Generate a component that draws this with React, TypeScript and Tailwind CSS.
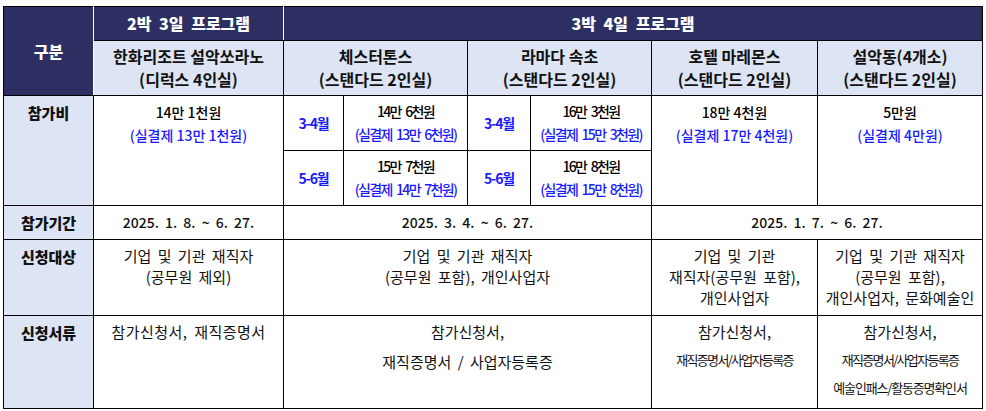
import React from "react";

const navy = "bg-[#2d2f62] text-white font-extrabold text-[16px]";
const head = "bg-[#dde4f4] font-bold text-[16px] leading-[23px]";
const label = "bg-[#dde4f4] font-extrabold text-[15px] align-top pt-[6px]";
const cell = "border border-black text-center";

function Price({ main, real, tight }: { main: string; real: string; tight?: boolean }) {
  return (
    <div className={tight ? "tracking-[-0.12em] [word-spacing:3px]" : ""}>
      <div className="font-medium text-black">{main}</div>
      <div className="mt-[2px] font-medium text-[#1a1aff]">{real}</div>
    </div>
  );
}

export default function App() {
  return (
    <main className="min-h-screen bg-white pl-[3px] pt-[6px] font-['Noto_Sans_CJK_KR',sans-serif] text-[14px] leading-[21px] text-[#111]">
      <table className="w-[979px] table-fixed border-collapse border border-black">
        <colgroup>
          <col className="w-[90px]" />
          <col className="w-[190px]" />
          <col className="w-[60px]" />
          <col className="w-[124px]" />
          <col className="w-[63px]" />
          <col className="w-[121px]" />
          <col className="w-[166px]" />
          <col className="w-[165px]" />
        </colgroup>
        <tbody>
          <tr className="h-[34px]">
            <td rowSpan={2} className={`${cell} ${navy} border-r-white`}>
              구분
            </td>
            <td className={`${cell} ${navy} border-r-white [word-spacing:4px]`}>
              2박 3일 프로그램
            </td>
            <td colSpan={6} className={`${cell} ${navy} [word-spacing:4px]`}>
              3박 4일 프로그램
            </td>
          </tr>
          <tr className="h-[55px]">
            <td className={`${cell} ${head}`}>
              <div>한화리조트 설악쏘라노</div>
              <div>(디럭스 4인실)</div>
            </td>
            <td colSpan={2} className={`${cell} ${head}`}>
              <div>체스터톤스</div>
              <div>(스탠다드 2인실)</div>
            </td>
            <td colSpan={2} className={`${cell} ${head}`}>
              <div>라마다 속초</div>
              <div>(스탠다드 2인실)</div>
            </td>
            <td className={`${cell} ${head}`}>
              <div>호텔 마레몬스</div>
              <div>(스탠다드 2인실)</div>
            </td>
            <td className={`${cell} ${head}`}>
              <div>설악동(4개소)</div>
              <div>(스탠다드 2인실)</div>
            </td>
          </tr>
          <tr className="h-[55px]">
            <td rowSpan={2} className={`${cell} ${label}`}>
              참가비
            </td>
            <td rowSpan={2} className={`${cell} align-top pt-[6px]`}>
              <Price main="14만 1천원" real="(실결제 13만 1천원)" />
            </td>
            <td className={`${cell} font-bold tracking-[-0.08em] text-[#1a1aff]`}>3-4월</td>
            <td className={`${cell} align-top pt-[5px]`}>
              <Price tight main="14만 6천원" real="(실결제 13만 6천원)" />
            </td>
            <td className={`${cell} font-bold tracking-[-0.08em] text-[#1a1aff]`}>3-4월</td>
            <td className={`${cell} align-top pt-[5px]`}>
              <Price tight main="16만 3천원" real="(실결제 15만 3천원)" />
            </td>
            <td rowSpan={2} className={`${cell} align-top pt-[6px]`}>
              <Price main="18만 4천원" real="(실결제 17만 4천원)" />
            </td>
            <td rowSpan={2} className={`${cell} align-top pt-[6px]`}>
              <Price main="5만원" real="(실결제 4만원)" />
            </td>
          </tr>
          <tr className="h-[55px]">
            <td className={`${cell} font-bold tracking-[-0.08em] text-[#1a1aff]`}>5-6월</td>
            <td className={`${cell} align-top pt-[5px]`}>
              <Price tight main="15만 7천원" real="(실결제 14만 7천원)" />
            </td>
            <td className={`${cell} font-bold tracking-[-0.08em] text-[#1a1aff]`}>5-6월</td>
            <td className={`${cell} align-top pt-[5px]`}>
              <Price tight main="16만 8천원" real="(실결제 15만 8천원)" />
            </td>
          </tr>
          <tr className="h-[34px] font-medium">
            <td className={`${cell} bg-[#dde4f4] font-extrabold text-[15px]`}>참가기간</td>
            <td className={`${cell} whitespace-pre [word-spacing:3px]`}>2025. 1. 8. ~ 6. 27.</td>
            <td colSpan={4} className={`${cell} whitespace-pre [word-spacing:3px]`}>
              2025. 3. 4. ~ 6. 27.
            </td>
            <td colSpan={2} className={`${cell} whitespace-pre [word-spacing:3px]`}>
              2025. 1. 7. ~ 6. 27.
            </td>
          </tr>
          <tr className="h-[76px] text-[15px]">
            <td className={`${cell} ${label}`}>신청대상</td>
            <td className={`${cell} align-top pt-[5px] [word-spacing:3px]`}>
              기업 및 기관 재직자
              <br />
              (공무원 제외)
            </td>
            <td colSpan={4} className={`${cell} align-top pt-[5px] [word-spacing:3px]`}>
              기업 및 기관 재직자
              <br />
              (공무원 포함), 개인사업자
            </td>
            <td className={`${cell} align-top pt-[5px] [word-spacing:3px]`}>
              기업 및 기관
              <br />
              재직자(공무원 포함),
              <br />
              개인사업자
            </td>
            <td className={`${cell} align-top pt-[5px] [word-spacing:3px]`}>
              기업 및 기관 재직자
              <br />
              (공무원 포함),
              <br />
              개인사업자, 문화예술인
            </td>
          </tr>
          <tr className="h-[93px] text-[15px]">
            <td className={`${cell} ${label}`}>신청서류</td>
            <td className={`${cell} align-top pt-[5px] tracking-[0.03em] [word-spacing:3px]`}>
              참가신청서, 재직증명서
            </td>
            <td colSpan={4} className={`${cell} align-top pt-[6px] leading-[30px] [word-spacing:3px]`}>
              <div className="-mt-[5px]">참가신청서,</div>
              <div>재직증명서 / 사업자등록증</div>
            </td>
            <td className={`${cell} align-top pt-[5px]`}>
              <div>참가신청서,</div>
              <div className="mt-[7px] text-[13px] tracking-[-0.13em]">재직증명서/사업자등록증</div>
            </td>
            <td className={`${cell} align-top pt-[5px]`}>
              <div>참가신청서,</div>
              <div className="mt-[7px] text-[13px] tracking-[-0.13em]">재직증명서/사업자등록증</div>
              <div className="mt-[7px] text-[13px] tracking-[-0.09em]">예술인패스/활동증명확인서</div>
            </td>
          </tr>
        </tbody>
      </table>
    </main>
  );
}
